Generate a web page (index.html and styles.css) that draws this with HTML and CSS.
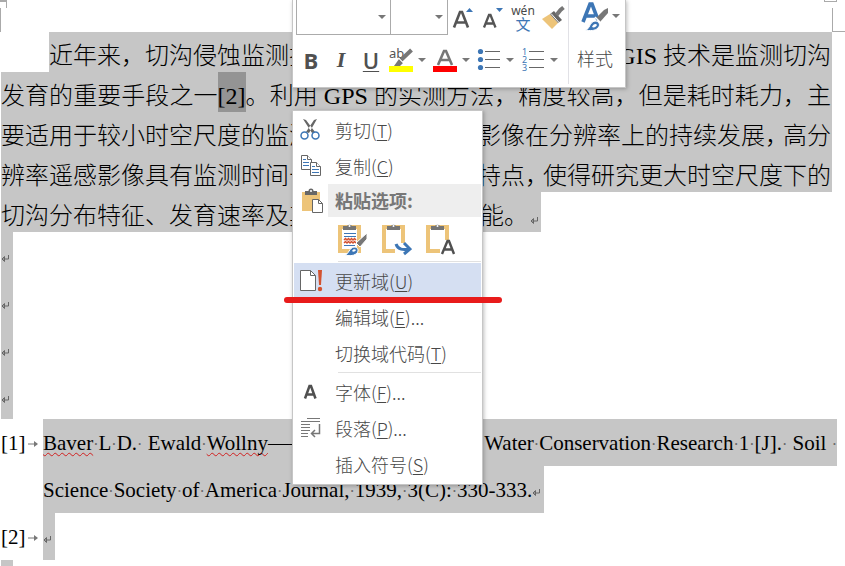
FILE: index.html
```html
<!DOCTYPE html>
<html lang="zh-CN">
<head>
<meta charset="utf-8">
<meta name="viewport" content="width=device-width, initial-scale=1">
<title>文档</title>
<link rel="stylesheet" href="styles.css">
</head>
<body>
<svg class="defs" aria-hidden="true">
  <symbol id="ret" viewBox="0 0 8 8"><path d="M7.500 1v4H1M3.500 2.500L1 5l2.500 2.500z" fill="none" stroke="#666"/></symbol>
  <symbol id="tab" viewBox="0 0 10 8"><path d="M0 4h8" stroke="#777"/><path d="M6 1l4 3-4 3z" fill="#777"/></symbol>
  <symbol id="caret" viewBox="0 0 8 4"><path d="M0 0h8L4 4z" fill="#777"/></symbol>
  <symbol id="clip" viewBox="0 0 30 34"><path d="M4 5h19v24H4z" fill="#fff" stroke="#edc479" stroke-width="4"/><path d="M7 8V4h4a3 3 0 0 1 5 0h4v4z" fill="#757575"/><circle cx="13.500" cy="4" r="1" fill="#fff"/></symbol>
</svg>
<main class="page">
  <i class="crop crop-left"></i><i class="crop crop-right"></i><i class="tick tick-left"></i><i class="tick tick-right"></i>
  <section class="body-text">
    <p class="line first"><span>近年来，切沟侵蚀监测技</span><span><span class="latin">GIS</span> 技术是监测切沟</span></p>
    <p class="line"><span class="full">发育的重要手段之一<span class="field latin">[2]</span>。利用 <span class="latin">GPS</span> 的实测方法，精度较高，但是耗时耗力，主</span></p>
    <p class="line"><span>要适用于较小时空尺度的监测</span><span>影像在分辨率上的持续发展<span class="tight">，</span>高分</span></p>
    <p class="line"><span>辨率遥感影像具有监测时间长</span><span>特点<span class="tight">，</span>使得研究更大时空尺度下的</span></p>
    <p class="line last"><span>切沟分布特征、发育速率及其</span><span>能。<svg class="ret"><use href="#ret"/></svg></span></p>
  </section>
  <section class="blank">
    <p><svg class="ret"><use href="#ret"/></svg></p>
    <p><svg class="ret"><use href="#ret"/></svg></p>
    <p><svg class="ret"><use href="#ret"/></svg></p>
    <p><svg class="ret"><use href="#ret"/></svg></p>
  </section>
  <section class="refs">
    <div class="ref">
      <span class="num">[1]<svg class="tab"><use href="#tab"/></svg></span>
      <div class="ref-text">
        <p class="rline"><span><span class="typo">Baver</span><b>·</b>L<b>·</b>D.<b>·</b> Ewald<b>·</b><span class="typo">Wollny</span>——</span><span><b>·</b>Water<b>·</b>Conservation<b>·</b>Research<b>·</b>1<b>·</b>[J].<b>·</b> Soil <b>·</b></span></p>
        <p class="rline short"><span>Science<b>·</b>Society<b>·</b>of<b>·</b>America<b>·</b>Journal,<b>·</b>1939,<b>·</b>3(C):<b>·</b>330-333.</span><svg class="ret"><use href="#ret"/></svg></p>
      </div>
    </div>
    <div class="ref">
      <span class="num">[2]<svg class="tab"><use href="#tab"/></svg></span>
      <p class="rline empty"><svg class="ret"><use href="#ret"/></svg></p>
    </div>
    <p class="tail"></p>
  </section>
</main>

<div class="toolbar" role="toolbar" aria-label="格式">
  <div class="tools">
    <div class="row top">
      <span class="pick wide"><select aria-label="字体"><option></option></select><svg class="caret"><use href="#caret"/></svg></span>
      <span class="pick"><select aria-label="字号"><option></option></select><svg class="caret"><use href="#caret"/></svg></span>
      <button class="tool" aria-label="增大字号"><svg width="24" height="28" viewBox="0 0 24 28"><path d="M3 23.500L9 8h2L17 23.500M5.500 18.500h9" fill="none" stroke="#555" stroke-width="2.600"/><path d="M15 8l3.500-4L22 8z" fill="#3d76b5"/></svg></button>
      <button class="tool" aria-label="减小字号"><svg width="24" height="28" viewBox="0 0 24 28"><path d="M3 23.500L8 11h1.500L14.500 23.500M5 19.500h8" fill="none" stroke="#555" stroke-width="2.300"/><path d="M15 4h7l-3.500 4z" fill="#3d76b5"/></svg></button>
      <button class="tool phonetic" aria-label="拼音指南"><span>wén</span><span class="han">文</span></button>
      <button class="tool" aria-label="格式刷"><svg width="24" height="24" viewBox="0 0 24 24"><path d="M1 13l8-5 8 9-6 6z" fill="#edc479"/><path d="M9 8l4-3 8 9-4 3z" fill="#666"/><path d="M15.500 9l4-5 3-2.500" fill="none" stroke="#777" stroke-width="4"/><path d="M10 7.500l8 9" stroke="#fff"/></svg></button>
    </div>
    <div class="row">
      <button class="tool letter bold">B</button>
      <button class="tool letter italic">I</button>
      <button class="tool letter under">U</button>
      <button class="split" aria-label="突出显示"><svg width="24" height="26" viewBox="0 0 24 26"><text x="0" y="11" class="ab">ab</text><path d="M22.500 3l-10.500 10" stroke="#777" stroke-width="4"/><path d="M10 12l4 4-3 3H5z" fill="#777"/><path d="M9.500 11l5 5" stroke="#fff"/><path d="M0 19h24v6H0z" fill="#ff0"/></svg><svg class="caret"><use href="#caret"/></svg></button>
      <button class="split" aria-label="字体颜色"><svg width="24" height="26" viewBox="0 0 24 26"><path d="M5 18L11 4h2l6 14M7.500 13h9" fill="none" stroke="#777" stroke-width="2.600"/><path d="M0 19h24v6H0z" fill="red"/></svg><svg class="caret"><use href="#caret"/></svg></button>
      <button class="split" aria-label="项目符号"><svg width="24" height="26" viewBox="0 0 24 26"><g fill="#3d76b5"><circle cx="3.500" cy="4.500" r="2.600"/><circle cx="3.500" cy="12.500" r="2.600"/><circle cx="3.500" cy="20.500" r="2.600"/></g><path d="M8 4.500h15M8 12.500h15M8 20.500h15" stroke="#666"/></svg><svg class="caret"><use href="#caret"/></svg></button>
      <button class="split" aria-label="编号"><svg width="24" height="26" viewBox="0 0 24 26"><text x="1" y="8" class="digit">1</text><text x="1" y="16" class="digit">2</text><text x="1" y="24" class="digit">3</text><path d="M8 4.500h15M8 12.500h15M8 20.500h15" stroke="#666"/></svg><svg class="caret"><use href="#caret"/></svg></button>
    </div>
  </div>
  <button class="styles"><span class="styles-icon"><svg width="30" height="32" viewBox="0 0 30 32"><path d="M4 22L11 4h2L19 20M7 16h10" fill="none" stroke="#3d76b5" stroke-width="3.600"/><path d="M29 8v5l-8 9-4-4 8-8z" fill="#777"/><path d="M6 30c5 0 4-8 10-9 4 0 6 4 3 7-3 3-8 3-13 2z" fill="#3d76b5" stroke="#fff"/><path d="M13 27c1-3 4-4 5-2-1 2-3 3-5 2z" fill="#fff"/><path d="M16 17l5 5" stroke="#fff" stroke-width="1.500"/></svg><svg class="caret"><use href="#caret"/></svg></span><span>样式</span></button>
</div>

<div class="menu" role="menu">
  <button class="item" role="menuitem"><svg width="24" height="24" viewBox="0 0 24 24"><path d="M3 1l3 1 9 12-3 1zM17 1l-3 1L6 14l3 1z" fill="#666"/><g fill="none" stroke="#3d76b5" stroke-width="1.500"><circle cx="4.500" cy="17.500" r="3.500"/><circle cx="15.500" cy="17.500" r="3.500"/></g></svg><span>剪切(<u>T</u>)</span></button>
  <button class="item" role="menuitem"><svg width="24" height="24" viewBox="0 0 24 24"><g fill="#fff" stroke="#666"><path d="M1.500 1.500h6l4 4v10h-10z"/><path d="M7.500 1.500v4h4"/><path d="M10.500 8.500h6l4 4v9h-10z"/><path d="M16.500 8.500v4h4"/></g><path d="M3 5.500h3M3 8.500h6M3 11.500h6M12 12.500h3M12 15.500h7M12 18.500h7" stroke="#3d76b5"/></svg><span>复制(<u>C</u>)</span></button>
  <div class="heading"><svg width="24" height="26" viewBox="0 0 24 26"><path d="M2 4h18v19H2z" fill="#edc479"/><path d="M5 7V3h3.500a2.500 2.500 0 0 1 5 0H17v4z" fill="#666"/><circle cx="11" cy="3" r="1" fill="#fff"/><path d="M12.500 11.500h6l4 4v9h-10z" fill="#fff" stroke="#666"/><path d="M18.500 11.500v4h4" fill="none" stroke="#666"/></svg><span>粘贴选项:</span></div>
  <div class="paste">
    <button aria-label="保留源格式"><svg width="32" height="34" viewBox="0 0 32 34"><use href="#clip" width="30" height="34"/><path d="M8 11.500h12M8 14.500h12M8 23.500h11" stroke="#3d76b5"/><path d="M8 18l1.500-1.500 1.500 1.500 1.500-1.500L14 18l1.500-1.500L17 18l1.500-1.500L20 18M8 21l1.500-1.500 1.500 1.500 1.500-1.500L14 21l1.500-1.500L17 21l1.500-1.500L20 21" fill="none" stroke="#d35230" stroke-width="1.500"/><path d="M31 11v6l-7 8-4-4z" fill="#777" stroke="#fff"/><path d="M9 33c4-1 4-7 9-8 5 0 5 5 2 7-3 2-7 2-11 1z" fill="#3d76b5" stroke="#fff"/><path d="M16 29c1-2 3-2 4-1-1 2-3 2-4 1z" fill="#fff"/></svg></button>
    <button aria-label="合并格式"><svg width="32" height="34" viewBox="0 0 32 34"><use href="#clip" width="30" height="34"/><path d="M15 21h16v13H15z" fill="#fff"/><path d="M16 22c2 6 7 6 14 5M24 21l6 6-6 5" fill="none" stroke="#3d76b5" stroke-width="3"/></svg></button>
    <button aria-label="只保留文本"><svg width="32" height="34" viewBox="0 0 32 34"><use href="#clip" width="30" height="34"/><path d="M16 18h14v16H16z" fill="#fff"/><path d="M18 32l5.500-13h1.500L30 32M20 27.500h8" fill="none" stroke="#505050" stroke-width="2.400"/></svg></button>
  </div>
  <hr>
  <button class="item active" role="menuitem"><svg width="24" height="24" viewBox="0 0 24 24"><path d="M.500 1.500h10l5 5v15H.500z" fill="#fff" stroke="#666"/><path d="M10.500 1.500v5h5" fill="none" stroke="#666"/><path d="M18 1h4l-1 15h-2z" fill="#d35230"/><circle cx="20" cy="20" r="2.200" fill="#d35230"/></svg><span>更新域(<u>U</u>)</span></button>
  <button class="item" role="menuitem"><span>编辑域(<u>E</u>)...</span></button>
  <button class="item" role="menuitem"><span>切换域代码(<u>T</u>)</span></button>
  <hr>
  <button class="item" role="menuitem"><svg width="24" height="24" viewBox="0 0 24 24"><path d="M5 18.500L9.500 6h1.500L15.500 18.500M7 14.500h7" fill="none" stroke="#505050" stroke-width="2.500"/></svg><span>字体(<u>F</u>)...</span></button>
  <button class="item" role="menuitem"><svg width="24" height="24" viewBox="0 0 24 24"><path d="M7 2.500h13M1 5.500h19M1 8.500h9M1 11.500h9M1 14.500h9M1 17.500h7M1 20.500h7" stroke="#777"/><path d="M19.500 8v9.500H12M15 14l-3.500 3.500L15 21" fill="none" stroke="#777" stroke-width="1.500"/></svg><span>段落(<u>P</u>)...</span></button>
  <button class="item" role="menuitem"><span>插入符号(<u>S</u>)</span></button>
</div>
<div class="marker"></div>
</body>
</html>
```
FILE: styles.css
```css
* { box-sizing: border-box; }
body { margin: 0; background: #fff; color: #000; font-family: "Liberation Serif", "Noto Sans CJK SC", serif; overflow: hidden; }
p { margin: 0; }
.defs { position: absolute; width: 0; height: 0; }
button { border: 0; padding: 0; background: none; color: inherit; font: inherit; }

.page { position: relative; padding: 32px 8px 0 1px; height: 100vh; overflow: hidden; }
.body-text { margin-right: 5px; font-size: 24px; font-weight: 300; }
.latin { font-weight: 400; }
.line { display: flex; justify-content: space-between; height: 40px; padding: 4px 1px 0 0; line-height: 40px; background: #c6c6c6; white-space: nowrap; }
.line.first { margin-left: 48px; }
.line.last { width: 540px; padding-right: 3px; }
.line > span { height: 36px; }
.full { flex: 1; white-space: normal; text-align-last: justify; }
.field { display: inline-block; height: 40px; margin-top: -4px; padding-top: 4px; vertical-align: top; background: #949494; }
.tight { padding-right: 6px; font-feature-settings: "halt"; }
.ret { width: 8px; height: 8px; flex: none; }
.line .ret { margin-left: 2px; }
.blank { display: grid; grid-template-rows: repeat(4, 1fr); width: 12px; height: 187px; background: #c6c6c6; }
.blank p { display: flex; align-items: center; padding-top: 6px; }
.refs { font-size: 21px; line-height: 47px; }
.ref { display: flex; }
.num { display: flex; align-items: center; justify-content: space-between; flex: none; width: 42px; height: 47px; padding: 2px 5px 0 0; }
.tab { width: 10px; height: 8px; }
.ref-text { flex: 1; }
.rline { display: flex; justify-content: space-between; height: 47px; padding-top: 1px; background: #c6c6c6; white-space: nowrap; }
.rline b { font-weight: 400; font-size: 16px; color: #666; }
.rline .ret { align-self: center; margin-top: 4px; }
.short { width: max-content; padding-right: 4px; }
.empty { width: 12px; }
.typo { text-decoration: underline wavy #d02020 1px; text-underline-offset: 2px; text-decoration-skip-ink: none; }
.tail { width: 12px; height: 47px; background: #c6c6c6; }
.crop, .tick { position: absolute; border: 0 solid #aaa; }
.crop { top: 8px; height: 24px; }
.crop-left { left: 0; border-left-width: 1px; }
.crop-right { right: 0; width: 13px; border-width: 0 0 1px 1px; }
.tick { top: 0; }
.tick-left { left: 0; width: 7px; height: 8px; border-width: 2px 1px 0 0; }
.tick-right { right: 8px; width: 13px; height: 2px; border-width: 0 1px 1px; }

.toolbar, .menu { position: absolute; left: 292px; border: 1px solid #c6c6c6; background: #fff; box-shadow: 1px 1px 4px #0004; color: #484848; font-family: "Noto Sans CJK SC", sans-serif; font-weight: 300; }
.toolbar { top: 0; display: flex; border-top: 0; padding: 0 0 3px 3px; }
.row { display: flex; align-items: center; height: 49px; }
.row.top { height: 35px; }
.row svg { overflow: visible; }
.tools { border-right: 1px solid #e1e1e6; }
.pick { position: relative; width: 57px; height: 35px; }
.pick.wide { width: 95px; }
.pick + .pick select { border-left: 0; }
.pick select { display: block; width: 100%; height: 100%; border: 1px solid #ababab; border-top: 0; border-radius: 0; background: #fff; appearance: none; }
.pick .caret { position: absolute; right: 5px; top: 15px; pointer-events: none; }
.caret { width: 8px; height: 4px; flex: none; }
.tool { display: flex; align-items: center; justify-content: center; width: 30px; height: 32px; }
.phonetic { flex-direction: column; font-family: "Noto Sans", sans-serif; font-size: 12px; line-height: 12px; font-weight: 400; }
.han { color: #3d76b5; font-family: "Noto Sans CJK SC", sans-serif; font-size: 15px; line-height: 14px; font-weight: 400; }
.letter { font-family: "Open Sans", sans-serif; font-size: 22px; line-height: 28px; color: #505050; }
.bold { font-weight: 700; }
.italic { font-family: "Liberation Serif", serif; font-style: italic; font-weight: 700; }
.under { text-decoration: underline 1px; text-underline-offset: 2px; font-weight: 600; }
.split { display: flex; align-items: center; gap: 5px; width: 44px; height: 32px; padding-left: 3px; }
.ab { font: 13px "Noto Sans", sans-serif; fill: #555; }
.digit { font: 9px "Noto Sans", sans-serif; fill: #3d76b5; }
.styles { display: flex; flex-direction: column; align-items: center; width: 56px; padding-right: 4px; font-size: 18px; line-height: 24px; }
.styles-icon { display: flex; align-items: center; gap: 3px; height: 46px; padding: 0 0 14px 8px; }

.menu { top: 110px; width: 191px; padding: 1px 1px 2px; font-size: 18px; line-height: 34px; }
.item, .heading { display: grid; grid-template-columns: 24px auto; column-gap: 11px; align-items: center; justify-content: start; width: 100%; height: 36px; padding-left: 6px; text-align: left; white-space: nowrap; }
.item span, .heading span { grid-column: 2; }
.item u { text-decoration-thickness: 1px; text-underline-offset: 2px; }
.active { background: #d5dff2; }
.heading { height: 33px; background: linear-gradient(to right, #fff 34px, #eee 34px); color: #777; line-height: 33px; font-weight: 700; }
.paste { display: flex; gap: 12px; height: 43px; padding: 5px 0 0 42px; }
.paste button { height: 34px; }
.paste svg { display: block; }
.menu hr { margin: 1px 0 1px 44px; border: 0; height: 1px; background: #e1e1e1; }
.marker { position: absolute; left: 284px; top: 297px; width: 218px; height: 6px; border-radius: 3px; background: #e81b1b; }
```
